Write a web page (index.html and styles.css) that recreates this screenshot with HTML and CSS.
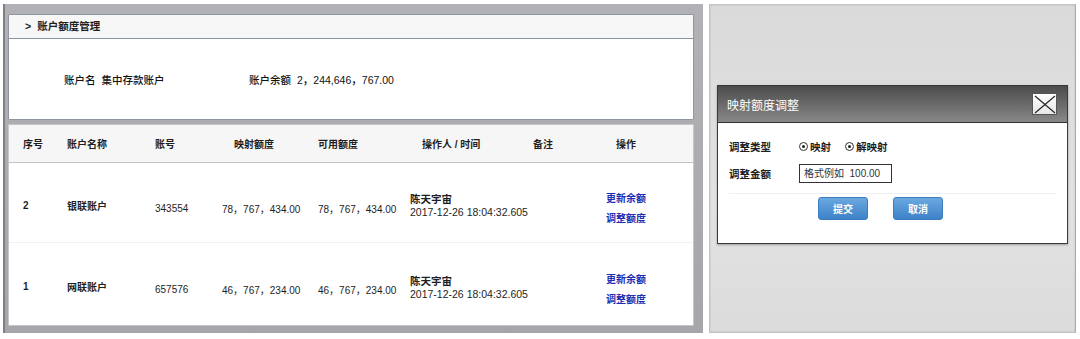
FILE: index.html
```html
<!DOCTYPE html>
<html lang="zh-CN">
<head>
  <meta charset="UTF-8">
  <title>账户额度管理</title>
  <link rel="stylesheet" href="styles.css">
</head>
<body>

  <div class="screen">
    <section class="main-frame">
      <div class="card">
        <div class="card-title"><span class="arrow">&gt;</span>账户额度管理</div>
        <div class="account-info">
          <div class="info-item info-name"><span class="info-label">账户名</span>集中存款账户</div>
          <div class="info-item"><span class="info-label">账户余额</span>2，244,646，767.00</div>
        </div>
      </div>

      <div class="card table-card">
        <div class="grid-row head">
          <div>序号</div>
          <div>账户名称</div>
          <div>账号</div>
          <div class="indent">映射额度</div>
          <div>可用额度</div>
          <div class="indent">操作人 / 时间</div>
          <div>备注</div>
          <div class="indent-op">操作</div>
        </div>
        <div class="grid-row">
          <div class="up">2</div>
          <div class="up">银联账户</div>
          <div>343554</div>
          <div>78，767，434.00</div>
          <div>78，767，434.00</div>
          <div class="operator"><b>陈天宇宙</b><br>2017-12-26 18:04:32.605</div>
          <div></div>
          <div class="actions"><a href="#">更新余额</a><a href="#">调整额度</a></div>
        </div>
        <div class="grid-row">
          <div class="up">1</div>
          <div class="up">网联账户</div>
          <div>657576</div>
          <div>46，767，234.00</div>
          <div>46，767，234.00</div>
          <div class="operator"><b>陈天宇宙</b><br>2017-12-26 18:04:32.605</div>
          <div></div>
          <div class="actions"><a href="#">更新余额</a><a href="#">调整额度</a></div>
        </div>
      </div>
    </section>

    <section class="modal-frame">
      <div class="dialog">
        <div class="dialog-title">
          <span>映射额度调整</span>
          <button class="close-btn" aria-label="关闭">
            <svg width="22" height="19" viewBox="0 0 22 19">
              <path d="M1 1 L21 18 M21 1 L1 18" stroke="#222" stroke-width="1.1" fill="none"/>
            </svg>
          </button>
        </div>
        <div class="dialog-body">
          <div class="form-row">
            <span class="form-label">调整类型</span>
            <label class="radio"><span class="dot"></span>映射</label>
            <label class="radio"><span class="dot"></span>解映射</label>
          </div>
          <div class="form-row">
            <span class="form-label">调整金额</span>
            <input class="amount" type="text" placeholder="格式例如  100.00">
          </div>
          <div class="form-buttons">
            <button class="btn">提交</button>
            <button class="btn">取消</button>
          </div>
        </div>
      </div>
    </section>
  </div>

</body>
</html>
```

FILE: styles.css
```css
body {
  margin: 0;
  padding: 0;
  background-color: #fff;
  font-family: 'Liberation Sans', 'Noto Sans CJK SC', sans-serif;
  font-size: 10px;
  color: #1e1e1e;
}

.screen {
  display: flex;
  gap: 6px;
  padding: 4px 4px 0 3px;
  height: 329px;
}

/* left window */
.main-frame {
  width: 700px;
  height: 329px;
  flex-shrink: 0;
  box-sizing: border-box;
  padding: 10px 9px 8px 3px;
  background: linear-gradient(to bottom, #b2b2b6, #a6a6aa);
  border-left: 2px solid #7f7f84;
  display: flex;
  flex-direction: column;
  gap: 4px;
}

.card {
  background-color: #fff;
  border: 1px solid #8e96a4;
  border-radius: 1px;
}

.card-title {
  height: 23px;
  line-height: 23px;
  padding-left: 16px;
  background-color: #f7f7f7;
  border-bottom: 1px solid #8893a6;
  font-weight: bold;
  font-size: 10.5px;
}

.arrow {
  margin-right: 6px;
}

.account-info {
  height: 80px;
  display: flex;
  align-items: center;
  padding-left: 55px;
  font-size: 10.5px;
  font-weight: 500;
  color: #111;
}

.info-name {
  width: 185px;
}

.info-label {
  margin-right: 6px;
}

.table-card {
  flex: 1;
  border-color: #c6c6c8;
}

.grid-row {
  display: grid;
  grid-template-columns: 44px 88px 67px 96px 92px 123px 73px 1fr;
  padding-left: 14px;
  height: 80px;
  align-items: center;
  border-bottom: 1px solid #f1f1f1;
  padding-top: 11px;
  box-sizing: border-box;
}

.grid-row:last-child {
  height: 82px;
  border-bottom: none;
}

.grid-row.head {
  height: 38px;
  padding-top: 0;
  background-color: #f6f6f6;
  border-bottom: 1px solid #bfc3ca;
  font-weight: bold;
}

.indent {
  padding-left: 12px;
}

.indent-op {
  padding-left: 10px;
}

.up {
  margin-top: -6px;
  font-weight: bold;
}

.operator {
  line-height: 13px;
  margin-top: -4px;
  font-size: 10.5px;
}

.actions {
  display: flex;
  flex-direction: column;
  gap: 5px;
  margin-top: -2px;
}

.actions a {
  color: #1c2fb0;
  font-weight: bold;
  text-decoration: none;
}

/* right window */
.modal-frame {
  flex: 1;
  box-sizing: border-box;
  height: 329px;
  background: linear-gradient(to bottom, #dadada, #e2e2e2 60%, #dcdcdc);
  border: 1px solid #c2c2c2;
  border-right-color: #aaa;
  box-shadow: inset 0 0 2px rgba(0, 0, 0, 0.15);
  padding: 80px 7px 0 7px;
}

.dialog {
  border: 1px solid #3a3a3a;
  background-color: #fff;
  box-shadow: 0 1px 2px rgba(0, 0, 0, 0.3);
}

.dialog-title {
  height: 36px;
  display: flex;
  align-items: center;
  justify-content: space-between;
  padding: 0 10px 0 9px;
  background: linear-gradient(to bottom, #4c4c4c, #888);
  color: #fff;
  font-size: 12px;
  border-bottom: 1px solid #333;
}

.close-btn {
  width: 25px;
  height: 22px;
  padding: 0;
  border: 1px solid #555;
  background: linear-gradient(to bottom, #fff, #e6e6e6);
  display: flex;
  align-items: center;
  justify-content: center;
  cursor: pointer;
}

.dialog-body {
  padding: 10px 0 23px 11px;
}

.form-row {
  display: flex;
  align-items: center;
  height: 27px;
  font-size: 10.5px;
}

.form-label {
  width: 70px;
  font-weight: bold;
}

.radio {
  display: flex;
  align-items: center;
  gap: 2px;
  margin-right: 14px;
  font-weight: bold;
}

.dot {
  width: 7px;
  height: 7px;
  border: 1px solid #333;
  border-radius: 50%;
  display: inline-flex;
  align-items: center;
  justify-content: center;
}

.dot::after {
  content: "";
  width: 3px;
  height: 3px;
  border-radius: 50%;
  background-color: #222;
}

.amount {
  width: 93px;
  height: 19px;
  box-sizing: border-box;
  border: 1.5px solid #333;
  padding: 0 4px;
  font-family: inherit;
  font-size: 10px;
}

.amount::placeholder {
  color: #333;
}

.form-buttons {
  display: flex;
  justify-content: center;
  gap: 25px;
  margin-top: 6px;
  padding-top: 3px;
  margin-right: 11px;
  border-top: 1px solid #f0f0f0;
  padding-right: 24px;
}

.btn {
  width: 50px;
  height: 23px;
  border: 1px solid #3c7dbd;
  border-radius: 3px;
  background: linear-gradient(to bottom, #6aa8e0, #3f82c8);
  color: #fff;
  font-family: inherit;
  font-weight: bold;
  font-size: 10px;
  cursor: pointer;
}
```
